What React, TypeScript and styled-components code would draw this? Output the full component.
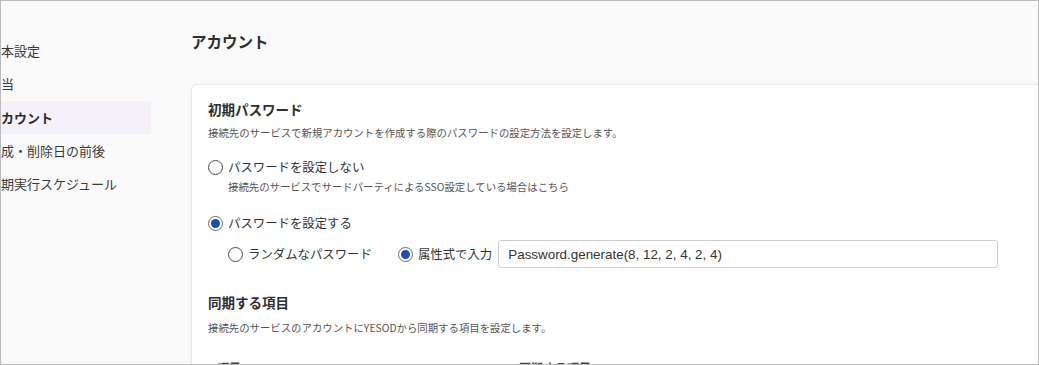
import React from "react"
import styled, { createGlobalStyle } from "styled-components"

const GlobalStyle = createGlobalStyle`
  html, body {
    margin: 0;
    padding: 0;
    background: #fafafa;
  }
  * {
    box-sizing: border-box;
  }
  body {
    font-family: "Noto Sans CJK JP", "Noto Sans", sans-serif;
    color: #333;
  }
`

const menu = [
  { label: "基本設定", active: false },
  { label: "担当", active: false },
  { label: "アカウント", active: true },
  { label: "作成・削除日の前後", active: false },
  { label: "定期実行スケジュール", active: false },
]

const App: React.FC = () => {
  return (
    <>
      <GlobalStyle />
      <Frame>
        <Sidebar>
          {menu.map(item => (
            <MenuItem key={item.label} $active={item.active}>
              <MenuLabel>{item.label}</MenuLabel>
            </MenuItem>
          ))}
        </Sidebar>
        <Main>
          <PageTitle>アカウント</PageTitle>
          <Card>
            {/* 初期パスワード */}
            <Section>
              <SectionTitle>初期パスワード</SectionTitle>
              <Description>接続先のサービスで新規アカウントを作成する際のパスワードの設定方法を設定します。</Description>
              <RadioRow $top={17}>
                <Radio />
                <RadioLabel>パスワードを設定しない</RadioLabel>
              </RadioRow>
              <Note>接続先のサービスでサードパーティによるSSO設定している場合はこちら</Note>
              <RadioRow $top={19}>
                <Radio $checked />
                <RadioLabel>パスワードを設定する</RadioLabel>
              </RadioRow>
              <SubOptions>
                <RadioRow $top={0}>
                  <Radio />
                  <RadioLabel>ランダムなパスワード</RadioLabel>
                </RadioRow>
                <RadioRow $top={0} $gap={26}>
                  <Radio $checked />
                  <RadioLabel>属性式で入力</RadioLabel>
                </RadioRow>
                <TextInput readOnly value="Password.generate(8, 12, 2, 4, 2, 4)" />
              </SubOptions>
            </Section>
            {/* 同期する項目 */}
            <Section $top={24}>
              <SectionTitle>同期する項目</SectionTitle>
              <Description $top={8}>接続先のサービスのアカウントにYESODから同期する項目を設定します。</Description>
              <TableHead>
                <HeadCell $width={302}>項目</HeadCell>
                <HeadCell>同期する項目</HeadCell>
              </TableHead>
            </Section>
          </Card>
        </Main>
      </Frame>
    </>
  )
}

export default App

const Frame = styled.div`
  width: 1039px;
  height: 365px;
  border: 1px solid #bcbcbc;
  background: #fafafa;
  overflow: hidden;
  display: flex;
`
const Sidebar = styled.nav`
  width: 189px;
  flex-shrink: 0;
  padding-top: 33px;
  overflow: hidden;
  display: flex;
  flex-direction: column;
`
const MenuItem = styled.div<{ $active?: boolean }>`
  width: 150px;
  height: 33.3px;
  display: flex;
  align-items: center;
  font-size: 13px;
  font-weight: ${p => (p.$active ? 700 : 400)};
  color: ${p => (p.$active ? "#2b2b2b" : "#3a3a3a")};
  background: ${p => (p.$active ? "#f6f1f8" : "transparent")};
  white-space: nowrap;
`
const MenuLabel = styled.span`
  margin-left: -13px;
`
const Main = styled.main`
  flex: 1;
  min-width: 0;
  padding: 29px 0 0 1px;
`
const PageTitle = styled.h1`
  margin: 0;
  font-size: 15.5px;
  font-weight: 600;
  line-height: 22px;
  color: #2e2e2e;
`
const Card = styled.div`
  width: 900px;
  margin-top: 32px;
  background: #fff;
  border: 1px solid #e8e8ec;
  border-radius: 6px;
  box-shadow: 0 0 3px rgba(0, 0, 0, 0.06);
  padding: 14px 16px 0;
`
const Section = styled.section<{ $top?: number }>`
  margin-top: ${p => p.$top || 0}px;
`
const SectionTitle = styled.h2`
  margin: 0;
  font-size: 13.5px;
  font-weight: 700;
  line-height: 20px;
  color: #2e2e2e;
`
const Description = styled.p<{ $top?: number }>`
  margin: ${p => p.$top ?? 6}px 0 0;
  font-size: 10.4px;
  line-height: 16px;
  color: #555;
`
const RadioRow = styled.label<{ $top: number; $gap?: number }>`
  display: flex;
  align-items: center;
  gap: 5px;
  margin-top: ${p => p.$top}px;
  margin-left: ${p => p.$gap || 0}px;
  flex-shrink: 0;
`
const Radio = styled.span<{ $checked?: boolean }>`
  width: 15px;
  height: 15px;
  border-radius: 50%;
  border: 1.4px solid ${p => (p.$checked ? "#6b6b6b" : "#4a4a4a")};
  background: #fff;
  display: flex;
  align-items: center;
  justify-content: center;
  &::after {
    content: "";
    display: ${p => (p.$checked ? "block" : "none")};
    width: 9px;
    height: 9px;
    border-radius: 50%;
    background: #1c4cb4;
  }
`
const RadioLabel = styled.span`
  font-size: 12.4px;
  line-height: 18px;
  color: #333;
  white-space: nowrap;
`
const Note = styled.p`
  margin: 3px 0 0 20px;
  font-size: 10.4px;
  line-height: 16px;
  color: #555;
`
const SubOptions = styled.div`
  display: flex;
  align-items: center;
  margin: 8px 0 0 20px;
`
const TextInput = styled.input`
  width: 500px;
  height: 28px;
  margin-left: 6px;
  padding: 0 9px;
  border: 1px solid #cfcfcf;
  border-radius: 3px;
  font-family: "Liberation Sans", Arial, sans-serif;
  font-size: 13.4px;
  color: #333;
  background: #fff;
  outline: none;
`
const TableHead = styled.div`
  display: flex;
  margin-top: 23px;
  padding-left: 9px;
  line-height: 18px;
`
const HeadCell = styled.div<{ $width?: number }>`
  width: ${p => (p.$width ? `${p.$width}px` : "auto")};
  font-size: 12px;
  font-weight: 700;
  color: #444;
`
